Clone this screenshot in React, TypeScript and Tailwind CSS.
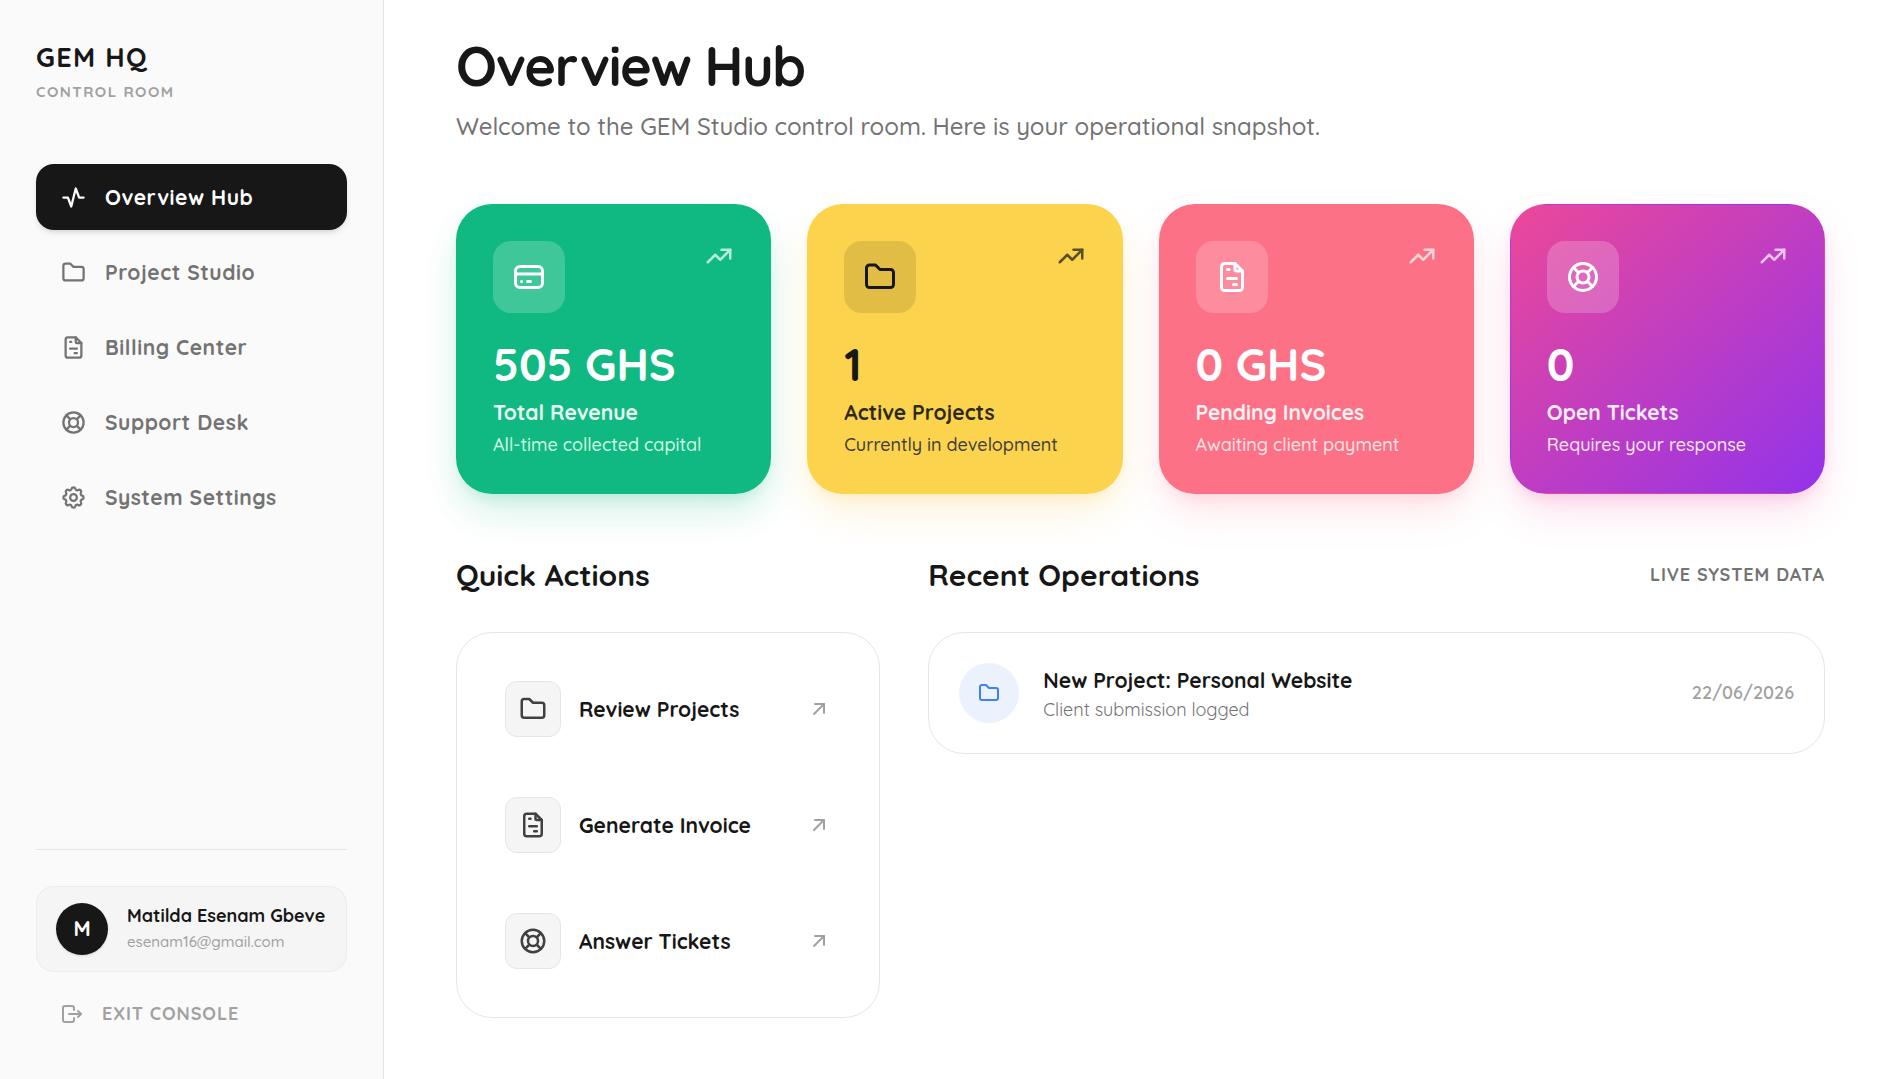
import React from 'react'
import {
  TbActivity,
  TbArrowUpRight,
  TbCreditCard,
  TbFileInvoice,
  TbFolder,
  TbLifebuoy,
  TbLogout,
  TbSettings,
  TbTrendingUp,
} from 'react-icons/tb'

const navItems = [
  { label: 'Overview Hub', icon: TbActivity, active: true },
  { label: 'Project Studio', icon: TbFolder },
  { label: 'Billing Center', icon: TbFileInvoice },
  { label: 'Support Desk', icon: TbLifebuoy },
  { label: 'System Settings', icon: TbSettings },
]

const stats = [
  {
    value: '505 GHS',
    label: 'Total Revenue',
    hint: 'All-time collected capital',
    icon: TbCreditCard,
    card: 'bg-[#10b981] text-white shadow-[0_20px_40px_-4px_rgba(16,185,129,0.2),0_8px_16px_-6px_rgba(16,185,129,0.2)]',
    iconBox: 'bg-white/20',
    hintColor: 'text-[#d1fae5]',
  },
  {
    value: '1',
    label: 'Active Projects',
    hint: 'Currently in development',
    icon: TbFolder,
    card: 'bg-[#fcd34d] text-neutral-900 shadow-[0_20px_40px_-4px_rgba(251,191,36,0.18),0_8px_16px_-6px_rgba(251,191,36,0.2)]',
    iconBox: 'bg-black/10',
    hintColor: 'text-neutral-700',
  },
  {
    value: '0 GHS',
    label: 'Pending Invoices',
    hint: 'Awaiting client payment',
    icon: TbFileInvoice,
    card: 'bg-[#fd7186] text-white shadow-[0_20px_40px_-4px_rgba(251,113,133,0.18),0_8px_16px_-6px_rgba(251,113,133,0.2)]',
    iconBox: 'bg-white/20',
    hintColor: 'text-[#ffe4e6]',
  },
  {
    value: '0',
    label: 'Open Tickets',
    hint: 'Requires your response',
    icon: TbLifebuoy,
    card: 'bg-[linear-gradient(to_bottom_right,#ec4899,#9333ea)] text-white shadow-[0_20px_40px_-4px_rgba(236,72,153,0.18),0_8px_16px_-6px_rgba(236,72,153,0.22)]',
    iconBox: 'bg-white/20',
    hintColor: 'text-[#fce7f3]',
  },
]

const quickActions = [
  { label: 'Review Projects', icon: TbFolder },
  { label: 'Generate Invoice', icon: TbFileInvoice },
  { label: 'Answer Tickets', icon: TbLifebuoy },
]

const operations = [
  { title: 'New Project: Personal Website', detail: 'Client submission logged', date: '22/06/2026' },
]

function Sidebar() {
  return (
    <aside className="flex w-96 shrink-0 flex-col border-r border-neutral-200 bg-neutral-50 p-9">
      <div>
        <p className="text-[27px] leading-[42px] font-bold tracking-wider">GEM HQ</p>
        <p className="mt-0.5 text-[15px] leading-[24px] font-bold tracking-widest text-neutral-400">CONTROL ROOM</p>
      </div>

      <nav className="mt-[60px] flex flex-col gap-[9px]">
        {navItems.map(({ label, icon: Icon, active }) => (
          <a
            key={label}
            href="#"
            className={`flex h-[66px] items-center gap-[18px] rounded-[18px] px-6 text-[21px] leading-[30px] font-bold tracking-wide ${
              active ? 'bg-neutral-900 text-white shadow-md' : 'text-neutral-500'
            }`}
          >
            <Icon className="size-[27px]" />
            {label}
          </a>
        ))}
      </nav>

      <div className="mt-auto border-t border-neutral-200 pt-9">
        <div className="flex items-center gap-[19px] rounded-[18px] border border-neutral-200/50 bg-neutral-100 px-[19px] py-4">
          <div className="flex size-[52px] shrink-0 items-center justify-center rounded-full bg-neutral-900 text-[21px] font-bold text-white shadow-sm">
            M
          </div>
          <div className="min-w-0">
            <p className="truncate text-[18px] leading-[26px] font-bold">Matilda Esenam Gbeve</p>
            <p className="truncate text-[15px] leading-[26px] font-medium text-neutral-400">esenam16@gmail.com</p>
          </div>
        </div>
        <button className="mt-3 flex h-[59px] w-full items-center gap-[18px] px-6 text-[18px] font-bold tracking-wider text-neutral-400">
          <TbLogout className="size-6" />
          EXIT CONSOLE
        </button>
      </div>
    </aside>
  )
}

function StatCard({ value, label, hint, icon: Icon, card, iconBox, hintColor }: (typeof stats)[number]) {
  return (
    <div className={`rounded-[36px] border border-transparent p-9 ${card}`}>
      <div className="flex items-start justify-between">
        <div className={`flex size-[72px] items-center justify-center rounded-[18px] ${iconBox}`}>
          <Icon className="size-9" />
        </div>
        <TbTrendingUp className="size-[30px] opacity-70" />
      </div>
      <p className="mt-7 text-[45px] leading-[46px] font-bold">{value}</p>
      <p className="mt-[11px] text-[21px] leading-[28px] font-bold opacity-90">{label}</p>
      <p className={`mt-[7px] text-[18px] leading-[24px] font-medium ${hintColor}`}>{hint}</p>
    </div>
  )
}

export default function App() {
  return (
    <div className="flex min-h-screen bg-white font-[Quicksand,Lato,sans-serif] text-neutral-900">
      <Sidebar />

      <main className="min-w-0 flex-1 py-9 pr-[70px] pl-[72px]">
        <h1 className="text-[54px] leading-[60px] font-bold tracking-tight">Overview Hub</h1>
        <p className="mt-3 text-[24px] leading-9 font-medium text-neutral-500">
          Welcome to the GEM Studio control room. Here is your operational snapshot.
        </p>

        <div className="mt-[60px] grid grid-cols-4 gap-9">
          {stats.map((stat) => (
            <StatCard key={stat.label} {...stat} />
          ))}
        </div>

        <div className="mt-[62px] grid grid-cols-3 gap-12">
          <section>
            <h2 className="text-[30px] leading-[38px] font-bold">Quick Actions</h2>
            <div className="mt-[38px] flex flex-col gap-3 rounded-[36px] border border-neutral-200 p-6">
              {quickActions.map(({ label, icon: Icon }) => (
                <a key={label} href="#" className="flex items-center gap-[18px] p-6">
                  <span className="flex size-14 shrink-0 items-center justify-center rounded-xl border border-neutral-200 bg-neutral-100 text-neutral-700">
                    <Icon className="size-[30px]" />
                  </span>
                  <span className="flex-1 text-[21px] leading-[30px] font-bold">{label}</span>
                  <TbArrowUpRight className="size-6 text-neutral-400" />
                </a>
              ))}
            </div>
          </section>

          <section className="col-span-2">
            <div className="flex items-center justify-between">
              <h2 className="text-[30px] leading-[38px] font-bold">Recent Operations</h2>
              <span className="text-[18px] leading-[24px] font-bold tracking-wider text-neutral-500">
                LIVE SYSTEM DATA
              </span>
            </div>
            <div className="mt-[38px] rounded-[36px] border border-neutral-200">
              {operations.map((op) => (
                <div key={op.title} className="flex items-center gap-6 p-[30px]">
                  <span className="flex size-[60px] shrink-0 items-center justify-center rounded-full bg-[#3b82f6]/10 text-[#3b82f6]">
                    <TbFolder className="size-6" />
                  </span>
                  <div className="min-w-0 flex-1">
                    <p className="text-[21px] leading-[34px] font-bold">{op.title}</p>
                    <p className="text-[18px] leading-[26px] text-neutral-500">{op.detail}</p>
                  </div>
                  <span className="text-[18px] leading-[24px] font-semibold text-neutral-400">{op.date}</span>
                </div>
              ))}
            </div>
          </section>
        </div>
      </main>
    </div>
  )
}
